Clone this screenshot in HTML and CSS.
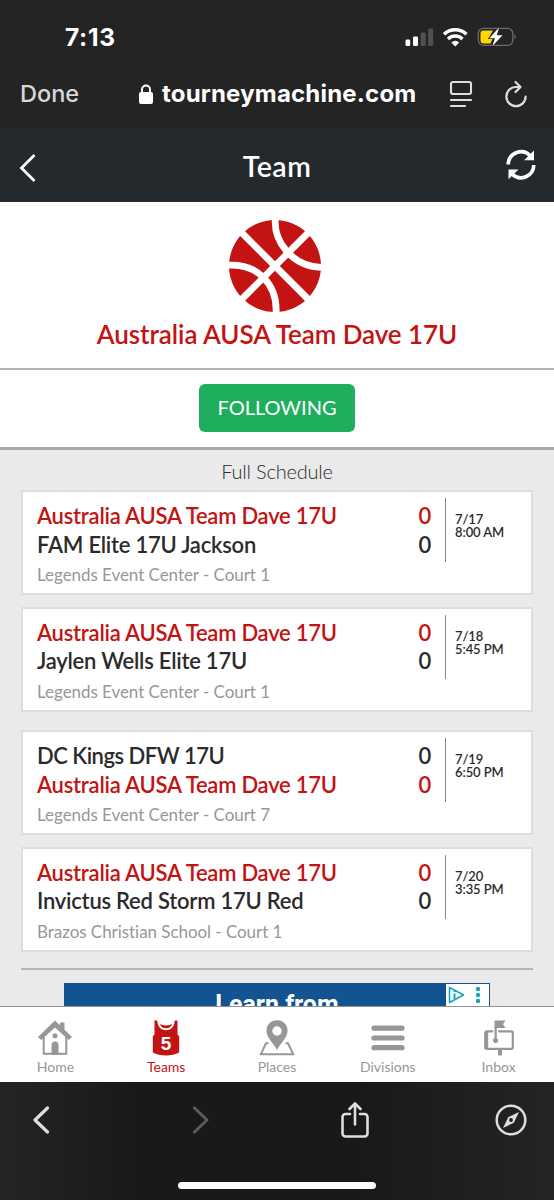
FILE: index.html
```html
<!DOCTYPE html>
<html lang="en">
<head>
    <meta charset="UTF-8">
    <meta name="viewport" content="width=device-width, initial-scale=1.0">
    <title>Team</title>
    <link rel="stylesheet" href="styles.css">
</head>
<body>
    <div class="status">
        <span class="time">7:13</span>
        <svg class="signals" width="114" height="24" viewBox="0 0 114 24">
            <g fill="#fff">
                <rect x="0.500" y="13.500" width="4.700" height="6.500" rx="1.300"/>
                <rect x="8" y="10.500" width="5" height="9.500" rx="1.300"/>
                <rect x="15.700" y="6.500" width="5" height="13.500" rx="1.300" fill="#505050"/>
                <rect x="23.200" y="2.500" width="5" height="17.500" rx="1.300" fill="#505050"/>
            </g>
            <g fill="none" stroke="#fff" stroke-width="3.500">
                <path d="M39 8.300a16.500 16.500 0 0 1 22.500 0"/>
                <path d="M43 13a10.500 10.500 0 0 1 14.500 0"/>
            </g>
            <path d="M46.300 16.500a6 6 0 0 1 7.900 0L50.250 20.500z" fill="#fff"/>
            <rect x="73.300" y="2.300" width="34.500" height="17" rx="5" fill="none" stroke="#6b6b6b" stroke-width="1.300"/>
            <path d="M109.300 8q3 2.800 0 5.600z" fill="#6b6b6b"/>
            <path d="M78.500 4.500H88L83 13h4.500l-2 4.500h-7a3 3 0 0 1-3-3v-7a3 3 0 0 1 3-3z" fill="#fdd60a"/>
            <path d="M94.300 1.300L84.300 12.300h5.700L87.300 20.300L97.500 9.300h-5.800z" fill="#fff" stroke="#242424" stroke-width="1.200" paint-order="stroke"/>
        </svg>
    </div>

    <div class="browser-bar">
        <span class="done">Done</span>
        <span class="address">
            <svg width="14" height="20" viewBox="0 0 14 20">
                <rect x="0" y="8" width="14" height="12" rx="2" fill="#fff"/>
                <path d="M3 9V5.500a4 4 0 0 1 8 0V9" fill="none" stroke="#fff" stroke-width="1.900"/>
            </svg>
            <b>tourneymachine.com</b>
        </span>
        <svg class="reader" width="24" height="28" viewBox="0 0 24 28" fill="none" stroke="#dedede" stroke-width="2.100" stroke-linecap="round">
            <rect x="2" y="2" width="20" height="12" rx="2"/>
            <path d="M2 20h20M2 26h14"/>
        </svg>
        <svg class="reload" width="24" height="28" viewBox="0 0 24 28" fill="none" stroke="#dedede" stroke-width="2.200" stroke-linecap="round" stroke-linejoin="round">
            <path d="M16 7h-4a9.600 9.600 0 1 0 9.600 9.600"/>
            <path d="M11.500 2l5 5-5 5"/>
        </svg>
    </div>

    <div class="header">
        <svg class="back" width="30" height="30" viewBox="0 0 30 30" fill="none" stroke="#fff" stroke-width="2.800">
            <path d="M16.500 2L3.500 15l13 13"/>
        </svg>
        <h1>Team</h1>
        <svg class="refresh" width="30" height="32" viewBox="0 0 30 32">
            <g fill="none" stroke="#fff" stroke-width="3.600">
                <path d="M2.200 15.500A12.800 12.800 0 0 1 24 6.500"/>
                <path d="M27.800 16A12.800 12.800 0 0 1 6 25"/>
            </g>
            <path d="M28 1.500v9.800h-10zM2.500 30.300v-9.800h10z" fill="#fff"/>
        </svg>
    </div>

    <div class="team">
        <svg width="92" height="92" viewBox="0 0 92 92">
            <circle cx="46" cy="46" r="46" fill="#c31313"/>
            <g fill="none" stroke="#fff" stroke-width="6.800">
                <path d="M11 11L81 81M11 81L81 11"/>
                <path d="M46.500-2C44 20 62 47 94 47.500"/>
                <path d="M-2 45.300C28 43 49 64 47 94"/>
            </g>
        </svg>
        <h2>Australia AUSA Team Dave 17U</h2>
    </div>

    <div class="follow">
        <button class="btn-follow">FOLLOWING</button>
    </div>

    <div class="schedule">
        <div class="schedule-title">Full Schedule</div>

        <div class="game">
            <div class="teams">
                <div class="row mine"><span>Australia AUSA Team Dave 17U</span><span>0</span></div>
                <div class="row"><span>FAM Elite 17U Jackson</span><span>0</span></div>
                <div class="place">Legends Event Center - Court 1</div>
            </div>
            <div class="when">7/17<br>8:00 AM</div>
        </div>

        <div class="game">
            <div class="teams">
                <div class="row mine"><span>Australia AUSA Team Dave 17U</span><span>0</span></div>
                <div class="row"><span>Jaylen Wells Elite 17U</span><span>0</span></div>
                <div class="place">Legends Event Center - Court 1</div>
            </div>
            <div class="when">7/18<br>5:45 PM</div>
        </div>

        <div class="game new-day">
            <div class="teams">
                <div class="row"><span class="tight">DC Kings DFW 17U</span><span>0</span></div>
                <div class="row mine"><span>Australia AUSA Team Dave 17U</span><span>0</span></div>
                <div class="place">Legends Event Center - Court 7</div>
            </div>
            <div class="when">7/19<br>6:50 PM</div>
        </div>

        <div class="game">
            <div class="teams">
                <div class="row mine"><span>Australia AUSA Team Dave 17U</span><span>0</span></div>
                <div class="row"><span>Invictus Red Storm 17U Red</span><span>0</span></div>
                <div class="place">Brazos Christian School - Court 1</div>
            </div>
            <div class="when">7/20<br>3:35 PM</div>
        </div>

        <div class="line"></div>

        <div class="ad">
            <span>Learn from</span>
            <div class="ad-choices">
                <svg width="43" height="22" viewBox="0 0 43 22">
                    <path d="M3.500 3.500v15L17.500 11z" fill="none" stroke="#16a5b8" stroke-width="1.600" stroke-linejoin="round"/>
                    <path d="M8.500 9.500v6M8.500 6.500v1.600" stroke="#16a5b8" stroke-width="2"/>
                    <g fill="#16a5b8">
                        <circle cx="32" cy="5" r="2.200"/>
                        <circle cx="32" cy="11" r="2.200"/>
                        <circle cx="32" cy="17" r="2.200"/>
                    </g>
                </svg>
            </div>
        </div>
    </div>

    <div class="tabs">
        <div class="tab">
            <svg width="36" height="36" viewBox="0 0 36 36">
                <g fill="#979797">
                    <path d="M18 0.500L35 17l-3.200 3L18 7.500 4.200 20 1 17z"/>
                    <path d="M23 2.500h4.500V10L23 6z"/>
                    <circle cx="18" cy="15.800" r="2.500"/>
                    <path d="M14.500 35V25a3.500 3.500 0 0 1 7 0v10z"/>
                </g>
                <path d="M6.700 17v16.800h22.600V17" fill="none" stroke="#979797" stroke-width="2"/>
            </svg>
            <span>Home</span>
        </div>
        <div class="tab active">
            <svg width="36" height="36" viewBox="0 0 36 36">
                <path d="M6.500 0.500h2.800C9.500 6 12.500 10.300 18 10.300s8.500-4.300 8.700-9.800h2.800v13c0 1.500.7 2 1.700 2.500v16.500Q25.500 35.500 18 35.500T4.800 32.500V16c1-.5 1.700-1 1.700-2.500z" fill="#c31313"/>
                <path d="M12 3.800c3.300 2.200 8.700 2.200 12 0-.8 3-3 4.500-6 4.500s-5.200-1.500-6-4.500z" fill="#c31313"/>
                <text class="number" x="18" y="30" text-anchor="middle">5</text>
            </svg>
            <span>Teams</span>
        </div>
        <div class="tab">
            <svg width="36" height="36" viewBox="0 0 36 36">
                <path d="M18 0.300c6.300 0 10.500 4.500 10.500 10.200 0 7.500-7 12.500-10.500 19.500C14.500 23 7.500 18 7.500 10.500 7.500 4.800 11.700 0.300 18 0.300zm0 6a4.700 4.700 0 1 0 0 9.400 4.700 4.700 0 0 0 0-9.400z" fill="#979797" fill-rule="evenodd"/>
                <path d="M9.500 23.300H7L1.800 34.200h32.400L29 23.300h-2.500" fill="none" stroke="#979797" stroke-width="2"/>
            </svg>
            <span>Places</span>
        </div>
        <div class="tab">
            <svg width="36" height="36" viewBox="0 0 36 36">
                <path d="M4 8.200h28M4 18h28M4 27.700h28" stroke="#979797" stroke-width="5.200" stroke-linecap="round"/>
            </svg>
            <span>Divisions</span>
        </div>
        <div class="tab">
            <svg width="36" height="36" viewBox="0 0 36 36">
                <rect x="4.400" y="11.400" width="27.400" height="17.400" rx="1.500" fill="none" stroke="#979797" stroke-width="2.200"/>
                <path d="M3.500 12h3.700v17H3.500zM17 29h4v6.500h-4z" fill="#979797"/>
                <path d="M14.600 10v3" stroke="#fff" stroke-width="5"/>
                <path d="M13.500 0.500H24.500L22 4.300l2.500 3.700h-8.700v11h-2.300z" fill="#979797"/>
                <circle cx="14.600" cy="20.500" r="2.500" fill="#979797"/>
            </svg>
            <span>Inbox</span>
        </div>
    </div>

    <div class="toolbar">
        <svg width="18" height="28" viewBox="0 0 18 28" fill="none" stroke="#dedede" stroke-width="3.200" stroke-linecap="round" stroke-linejoin="round">
            <path d="M15.500 2L3 14l12.500 12"/>
        </svg>
        <svg width="18" height="28" viewBox="0 0 18 28" fill="none" stroke="#5c5c5c" stroke-width="3" stroke-linecap="round" stroke-linejoin="round">
            <path d="M2.500 2L15 14 2.500 26"/>
        </svg>
        <svg width="28" height="36" viewBox="0 0 28 36" fill="none" stroke="#dedede" stroke-width="2.600" stroke-linecap="round" stroke-linejoin="round">
            <path d="M9 12H4.500a3 3 0 0 0-3 3v16.500a3 3 0 0 0 3 3h19a3 3 0 0 0 3-3V15a3 3 0 0 0-3-3H19"/>
            <path d="M14 22.500V1.500M8.500 7L14 1.500 19.500 7"/>
        </svg>
        <svg width="32" height="32" viewBox="0 0 32 32">
            <circle cx="16" cy="16" r="14.300" fill="none" stroke="#dedede" stroke-width="2.500"/>
            <path d="M24 8l-5.200 10.800L8 24l5.200-10.800z" fill="#dedede"/>
            <circle cx="16" cy="16" r="1.900" fill="#202020"/>
        </svg>
        <div class="home-indicator"></div>
    </div>
</body>
</html>
```

FILE: styles.css
```css
* {
	box-sizing: border-box;
}

body {
	margin: 0;
	height: 1200px;
	display: flex;
	flex-direction: column;
	overflow: hidden;
	font-family: Lato, sans-serif;
	background-color: #eaeaea;
	color: #2b2b2b;
}

svg {
	display: block;
	flex: none;
}

/* browser top */
.status {
	height: 64px;
	padding: 10px 35px 0 65px;
	display: flex;
	align-items: center;
	justify-content: space-between;
	background-color: #242424;
	font-family: Inter, sans-serif;
	color: white;
}

.time {
	font-size: 24.5px;
	font-weight: 700;
	letter-spacing: 0.7px;
}

.signals {
	margin-top: 2px;
}

.browser-bar {
	height: 65px;
	padding: 0 26px 6px 20px;
	display: flex;
	align-items: center;
	background-color: #242424;
	font-family: Inter, sans-serif;
	font-size: 23.5px;
	color: white;
}

.done {
	width: 119px;
	font-weight: 500;
	color: #d8d8d8;
}

.address {
	flex: 1;
	display: flex;
	align-items: center;
	gap: 9px;
}

.address b {
	font-size: 24px;
	letter-spacing: 0.2px;
}

.reader {
	margin-right: 31px;
}

.header {
	height: 73px;
	padding: 0 18px;
	display: flex;
	align-items: center;
	justify-content: space-between;
	background-color: #23292c;
	color: white;
}

.header h1 {
	margin: 0;
	font-size: 28.5px;
	font-weight: 600;
	letter-spacing: 0.5px;
}

.back {
	margin-top: 5px;
}

.refresh {
	margin-bottom: 2px;
}

/* team */
.team {
	height: 168px;
	padding-top: 18px;
	display: flex;
	flex-direction: column;
	align-items: center;
	gap: 6px;
	background-color: white;
	border-bottom: 2px solid #b9b5b5;
}

.team svg {
	margin-right: 4px;
}

.team h2 {
	margin: 0;
	font-size: 26px;
	line-height: 32px;
	font-weight: 600;
	letter-spacing: -0.07px;
	color: #c31313;
}

.follow {
	height: 80px;
	display: flex;
	justify-content: center;
	align-items: flex-start;
	padding-top: 14px;
	background-color: white;
	border-bottom: 3px solid #a9a9a9;
}

.btn-follow {
	width: 156px;
	height: 48px;
	padding: 0 0 2px;
	border: none;
	border-radius: 6px;
	background-color: #1fae5e;
	color: white;
	font-family: Lato, sans-serif;
	font-size: 20px;
}

/* games */
.schedule {
	flex: 1;
	padding: 0 21px;
	overflow: hidden;
}

.schedule-title {
	height: 40px;
	line-height: 42px;
	text-align: center;
	font-size: 20px;
	font-weight: 300;
	letter-spacing: -0.2px;
}

.game {
	height: 105px;
	margin-bottom: 11.5px;
	padding: 6px 15px 0 14px;
	display: flex;
	background-color: white;
	border: 2px solid #dedede;
}

.new-day {
	margin-top: 18.5px;
}

.teams {
	width: 394px;
	padding-top: 4px;
}

.row {
	display: flex;
	justify-content: space-between;
	height: 28.5px;
	font-size: 22px;
	line-height: 28px;
	font-weight: 600;
	letter-spacing: -0.24px;
}

.tight {
	letter-spacing: -0.5px;
}

.mine {
	color: #c31313;
}

.place {
	margin-top: 4px;
	font-size: 17px;
	line-height: 24px;
	letter-spacing: -0.05px;
	color: #979797;
}

.when {
	height: 64px;
	margin-left: 14px;
	padding: 15px 0 0 9px;
	border-left: 1px solid #888;
	font-size: 13px;
	line-height: 13px;
	font-weight: 600;
	letter-spacing: -0.1px;
}

.line {
	margin-top: 16px;
	height: 2px;
	background-color: #b5b5b5;
}

.ad {
	position: relative;
	height: 60px;
	width: 426px;
	margin: 13px auto 0;
	background-color: #125492;
	color: white;
	text-align: center;
	font-family: Roboto, sans-serif;
	font-size: 25px;
	font-weight: 700;
	line-height: 44px;
}

.ad-choices {
	position: absolute;
	top: 1px;
	right: 1px;
	background-color: white;
}

/* tab bar */
.tabs {
	position: relative;
	height: 76px;
	display: flex;
	background-color: white;
	border-top: 1px solid #929292;
}

.tab {
	flex: 1;
	padding-top: 13px;
	display: flex;
	flex-direction: column;
	align-items: center;
	font-size: 14px;
	line-height: 22px;
	color: #979797;
}

.active {
	color: #c31313;
}

.number {
	font-family: "Liberation Sans", sans-serif;
	font-size: 19px;
	font-weight: 700;
	fill: white;
}

/* browser bottom */
.toolbar {
	position: relative;
	height: 118px;
	padding: 0 27px 42px 32px;
	display: grid;
	grid-template-columns: 160px 149px 154px 32px;
	align-items: center;
	background: linear-gradient(90deg, #242424, #191919 25%, #191919 65%, #242424);
}

.home-indicator {
	position: absolute;
	left: 178px;
	bottom: 11px;
	width: 198px;
	height: 7px;
	border-radius: 4px;
	background-color: white;
}
```
